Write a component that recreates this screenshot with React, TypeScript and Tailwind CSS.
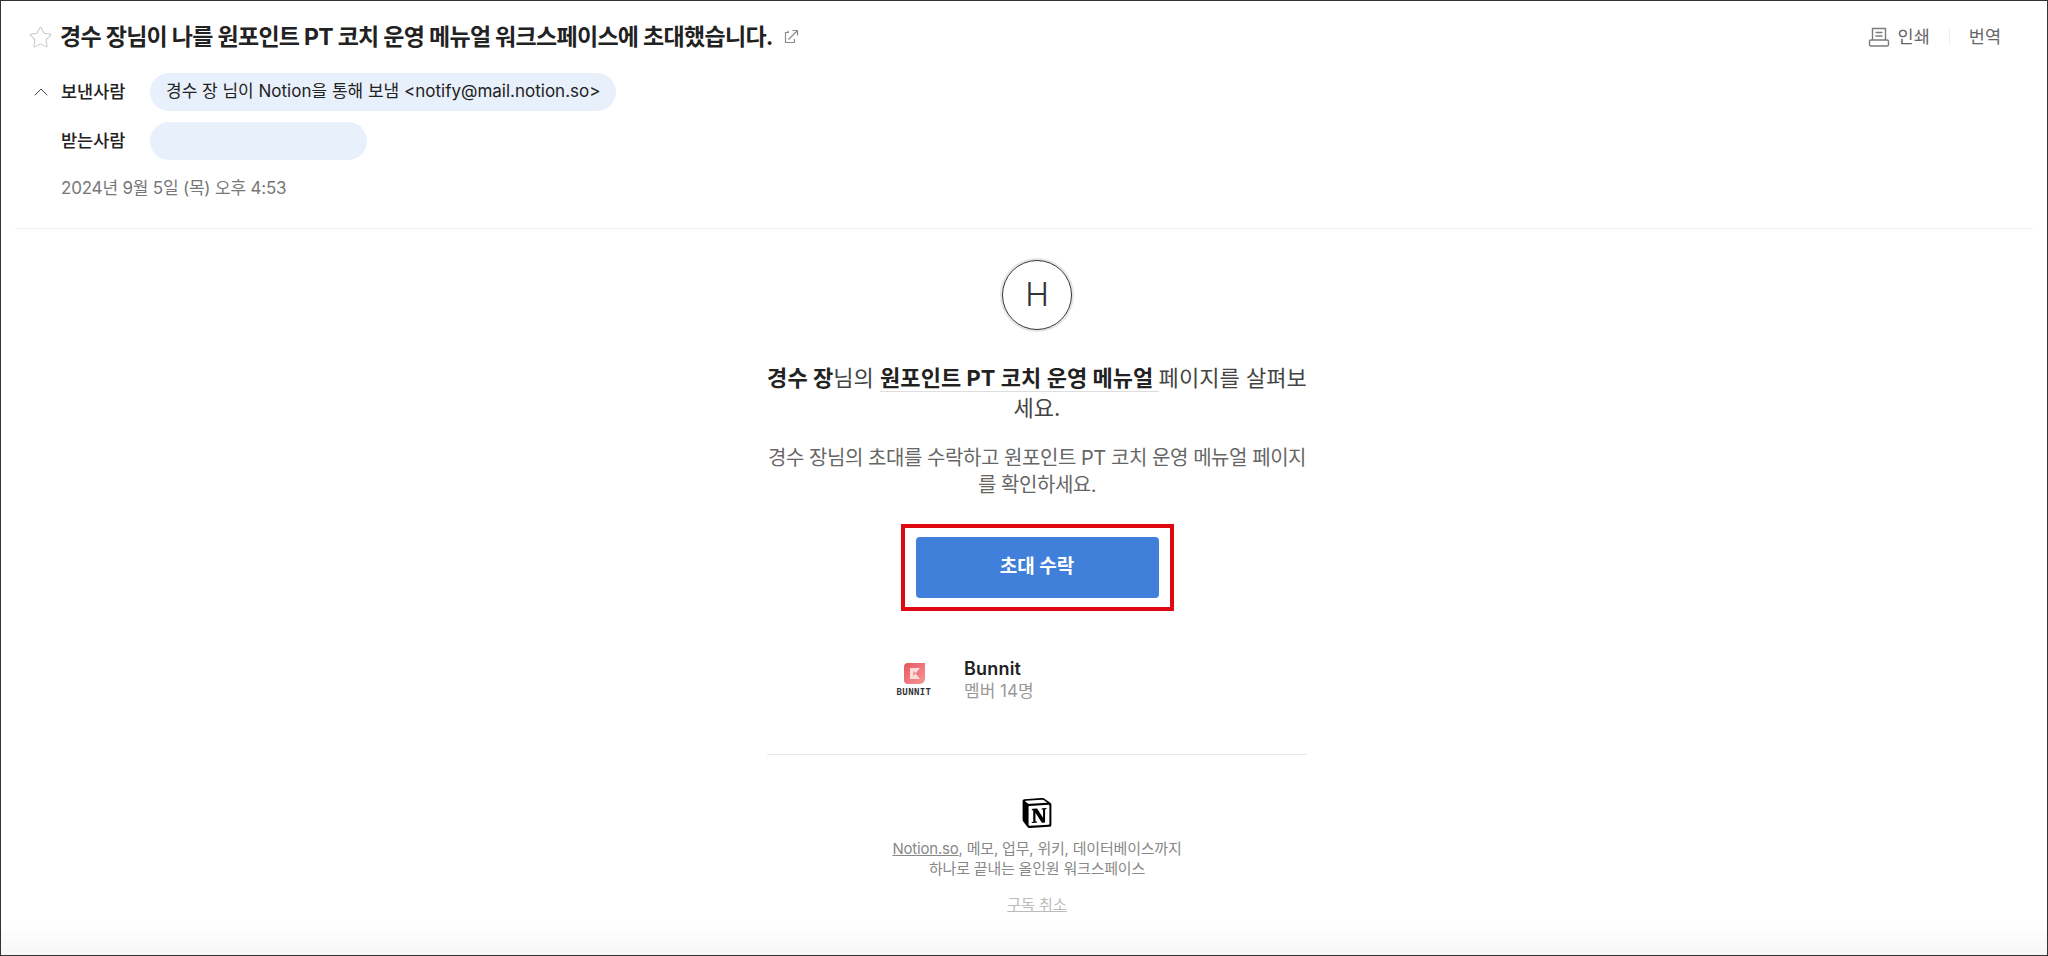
import { ChevronUp, Star } from "lucide-react";
import { SiNotion } from "react-icons/si";

const FONT = "font-['Inter','Noto_Sans_CJK_KR',sans-serif]";

function OpenIcon() {
  return (
    <svg width="16" height="16" viewBox="0 0 16 16" fill="none" stroke="#8a8a8a" strokeWidth="1.2">
      <path d="M6 3.500H2.500v10h9V10" />
      <path d="M5 3.500V1.800M5.500 10.500 14 2M9.500 1.500H14.500V6.500" />
    </svg>
  );
}

function PrintIcon() {
  return (
    <svg width="22" height="22" viewBox="0 0 22 22" fill="none" stroke="#7b7b7b" strokeWidth="1.4">
      <path d="M4.500 14V2.500h13V14" />
      <path d="M7.500 6.500h7M7.500 10h7" />
      <rect x="1.500" y="14" width="19" height="6" rx="1.500" />
    </svg>
  );
}

function BunnitLogo() {
  return (
    <div className="flex w-[36px] flex-col items-center">
      <svg width="21" height="21" viewBox="0 0 21 21">
        <defs>
          <linearGradient id="bunnit" x1="0" y1="0" x2="1" y2="1">
            <stop offset="0" stopColor="#e8545f" />
            <stop offset="1" stopColor="#f49a98" />
          </linearGradient>
        </defs>
        <path d="M4 0h17v16a5 5 0 0 1-5 5H4a4 4 0 0 1-4-4V4a4 4 0 0 1 4-4z" fill="url(#bunnit)" />
        <path d="M6 5h10l-4.500 5.500L16 16H6z" fill="#fbdcdc" />
        <path d="M9.500 8v5l2.300-2.500z" fill="#ee7f82" />
      </svg>
      <span className="mt-[3px] font-['DejaVu_Sans_Mono',monospace] text-[9px] leading-[10px] font-bold tracking-[0.4px] text-[#333]">BUNNIT</span>
    </div>
  );
}

export default function App() {
  return (
    <div className={`flex h-[956px] w-[2048px] flex-col overflow-hidden border border-[#333] bg-white ${FONT}`}>
      <header className="mx-[14px] h-[228px] shrink-0 border-b border-[#eeeeee] pt-[20px]">
        <div className="flex items-center pr-[32px]">
          <Star size={25} strokeWidth={1} className="ml-[13px] text-[#c9c9c9]" />
          <h1 className="ml-[7px] text-[23px] leading-[32px] font-bold tracking-[-0.7px] text-[#222]">
            경수 장님이 나를 원포인트 PT 코치 운영 메뉴얼 워크스페이스에 초대했습니다.
          </h1>
          <span className="ml-[10px]">
            <OpenIcon />
          </span>
          <div className="ml-auto flex items-center text-[17.5px] text-[#666]">
            <PrintIcon />
            <span className="ml-[8px]">인쇄</span>
            <span className="mx-[19px] h-[18px] w-px bg-[#eeeeee]" />
            <span>번역</span>
          </div>
        </div>

        <div className="mt-[20px] flex items-center">
          <ChevronUp size={24} strokeWidth={1} className="ml-[14px] text-[#444]" />
          <span className="ml-[8px] w-[89px] text-[17.5px] font-medium text-[#222]">보낸사람</span>
          <span className="flex h-[38px] items-center rounded-[19px] bg-[#e8f0fb] px-[16px] text-[17px] text-[#222]">
            경수 장 님이 Notion을 통해 보냄 &lt;notify@mail.notion.so&gt;
          </span>
        </div>
        <div className="mt-[11px] flex items-center">
          <span className="ml-[46px] w-[89px] text-[17.5px] font-medium text-[#222]">받는사람</span>
          <span className="h-[38px] w-[217px] rounded-[19px] bg-[#e8f0fb]" />
        </div>
        <p className="mt-[16px] ml-[46px] text-[17px] leading-[24px] tracking-[-0.2px] text-[#777]">2024년 9월 5일 (목) 오후 4:53</p>
      </header>

      <main className="flex flex-1 flex-col items-center pl-[26px]">
        <div className="mt-[31px] flex h-[70px] w-[70px] items-center justify-center rounded-full border-[1.5px] border-[#333] text-[32px] font-light text-[#333] shadow-[0_0_0_2px_#e5e5e5]">
          H
        </div>

        <h2 className="mt-[33px] w-[546px] text-center text-[22px] leading-[30px] tracking-[0.05px] text-[#444]">
          <b className="font-bold text-[#222]">경수 장</b>님의{" "}
          <b className="border-b border-[#ddd] font-bold text-[#222]">원포인트 PT 코치 운영 메뉴얼 </b>페이지를 살펴보세요.
        </h2>
        <p className="mt-[22px] w-[544px] text-center text-[20px] leading-[27px] tracking-[-0.45px] text-[#666]">
          경수 장님의 초대를 수락하고 원포인트 PT 코치 운영 메뉴얼 페이지를 확인하세요.
        </p>

        <div className="mt-[25px] border-[4px] border-[#e00912] px-[11px] py-[9px]">
          <button type="button" className="flex h-[61px] w-[243px] items-center justify-center rounded-[4px] bg-[#4080da] text-[19px] font-bold text-white">
            초대 수락
          </button>
        </div>

        <div className="mt-[46px] flex w-[282px] items-center self-center">
          <BunnitLogo />
          <div className="ml-[32px] flex flex-col">
            <span className="text-[18px] leading-[23px] font-semibold tracking-[0.2px] text-[#222]">Bunnit</span>
            <span className="text-[17px] leading-[23px] text-[#999]">멤버 14명</span>
          </div>
        </div>

        <div className="mt-[51px] h-px w-[540px] shrink-0 bg-[#e8e8e8]" />

        <SiNotion size={30} className="mt-[43px] text-black" />
        <p className="mt-[11px] text-center text-[15px] leading-[20px] tracking-[-0.2px] text-[#888]">
          <span className="underline">Notion.so</span>, 메모, 업무, 위키, 데이터베이스까지
          <br />
          하나로 끝내는 올인원 워크스페이스
        </p>
        <span className="mt-[16px] text-[15px] leading-[20px] text-[#bbb] underline">구독 취소</span>
      </main>

      <div className="h-[30px] shrink-0 bg-gradient-to-b from-white to-[#f6f6f6]" />
    </div>
  );
}
